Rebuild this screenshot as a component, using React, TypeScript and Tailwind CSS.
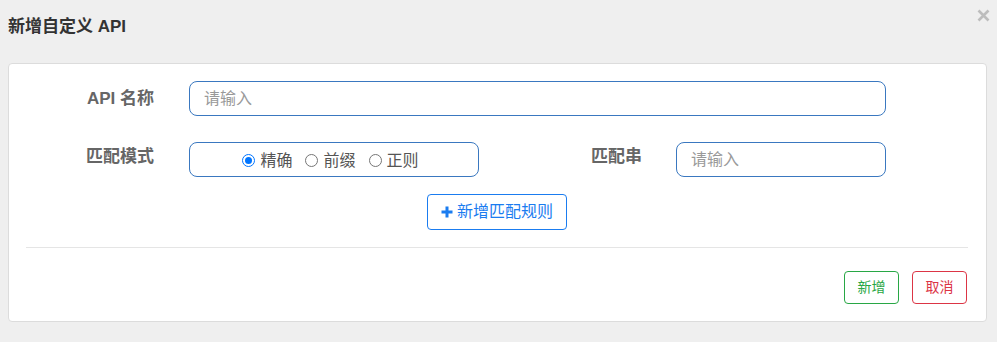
import React from "react";

const cjk = { fontFamily: '"Liberation Sans", "Noto Sans CJK SC", sans-serif' };

function Radio({ checked, label, last }: { checked?: boolean; label: string; last?: boolean }) {
  return (
    <label className={last ? "flex items-center gap-[5px] mr-[7px]" : "flex items-center gap-[5px] mr-[13px]"}>
      {checked ? (
        <span className="w-[13px] h-[13px] rounded-full border-[1.5px] border-[#0075ff] flex items-center justify-center">
          <span className="w-[7px] h-[7px] rounded-full bg-[#0075ff]" />
        </span>
      ) : (
        <span className="w-[13px] h-[13px] rounded-full border border-[#767676] bg-white" />
      )}
      <span className="text-[16px] text-[#555]">{label}</span>
    </label>
  );
}

export default function App() {
  return (
    <div className="w-[997px] h-[342px] bg-[#efefef] relative" style={cjk}>
      <div className="h-[63px] pl-[8px] pt-[15px]">
        <div className="text-[17px] font-bold text-[#333] leading-[24px]">新增自定义 API</div>
      </div>
      <button className="absolute left-[977px] top-[9px]">
        <svg width="13" height="13" viewBox="0 0 13 13">
          <path d="M1.5 1.5l10 10M11.5 1.5l-10 10" stroke="#bdbdbd" strokeWidth="2.6" />
        </svg>
      </button>
      <div className="mx-[8px] w-[979px] h-[259px] bg-white border border-[#dcdcdc] rounded-[4px] px-[17px] pt-[17px]">
        <div className="flex items-center">
          <div className="w-[128px] text-right text-[17px] font-bold text-[#666]">API 名称</div>
          <div className="ml-[35px] w-[697px] h-[35px] border border-[#3a78c0] rounded-[8px] flex items-center pl-[14px] text-[16px] text-[#999]">
            请输入
          </div>
        </div>
        <div className="flex items-start mt-[26px]">
          <div className="w-[128px] text-right text-[17px] font-bold text-[#666] pt-[2px]">匹配模式</div>
          <div className="ml-[35px] w-[290px] h-[35px] border border-[#3a78c0] rounded-[8px] flex items-center justify-center pt-[2px]">
            <Radio checked label="精确" />
            <Radio label="前缀" />
            <Radio label="正则" last />
          </div>
          <div className="w-[163px] text-right text-[17px] font-bold text-[#666] pt-[2px]">匹配串</div>
          <div className="ml-[34px] w-[210px] h-[35px] border border-[#3a78c0] rounded-[8px] flex items-center pl-[14px] text-[16px] text-[#999]">
            请输入
          </div>
        </div>
        <div className="flex justify-center mt-[17px] pr-[1px]">
          <button className="w-[140px] h-[36px] border border-[#1a7cf0] rounded-[4px] flex items-center justify-center gap-[4px] text-[16px] text-[#1a7cf0]">
            <svg width="12" height="12" viewBox="0 0 12 12">
              <path d="M6 0.5v11M0.5 6h11" stroke="#1a7cf0" strokeWidth="3" />
            </svg>
            新增匹配规则
          </button>
        </div>
        <div className="mt-[17px] border-t border-[#e5e5e5] mr-[1px]" />
        <div className="flex justify-end mt-[23px] gap-[13px] pr-[2px]">
          <button className="w-[55px] h-[33px] border border-[#28a745] rounded-[4px] text-[14px] text-[#28a745]">新增</button>
          <button className="w-[55px] h-[33px] border border-[#dc3545] rounded-[4px] text-[14px] text-[#dc3545]">取消</button>
        </div>
      </div>
    </div>
  );
}
